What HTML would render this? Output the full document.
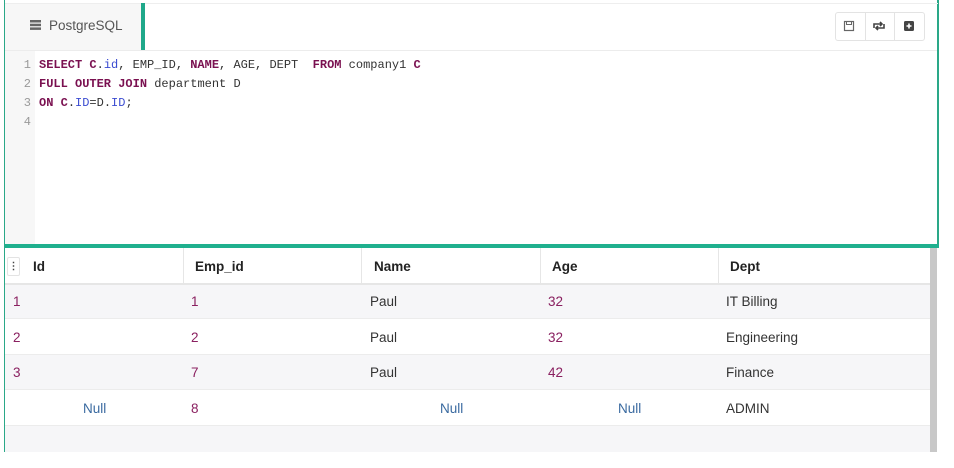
<!DOCTYPE html>
<html><head><style>
body{margin:0;width:954px;height:468px;background:#fff;position:relative;overflow:hidden;font-family:"Liberation Sans",sans-serif}
.a{position:absolute}
.code{font-family:"Liberation Mono",monospace;font-size:12px;color:#333;line-height:19px}
.k{color:#7a1050;font-weight:bold}.v{color:#3a4bd0}
.ln{color:#999;text-align:right;width:26px}
.hd{font-weight:bold;font-size:13.5px;color:#222}
.c{font-size:13.5px;color:#333}
.p{color:#8a2060}.n{color:#3a6aa0}
</style></head><body>
<div class="a" style="left:4px;top:0;width:1px;height:452px;background:#2aa888"></div>
<div class="a" style="left:937px;top:0;width:2px;height:248px;background:#2aa888"></div>
<div class="a" style="left:5px;top:3px;width:933px;height:1px;background:#eee"></div>
<div class="a" style="left:5px;top:4px;width:136px;height:46px;background:#f7f7f7"></div>
<div class="a" style="left:141px;top:3px;width:4px;height:47px;background:#1fa88a"></div>
<div class="a" style="left:5px;top:50px;width:932px;height:1px;background:#ececec"></div>
<svg class="a" style="left:30px;top:20px" width="11" height="10"><rect x="0" y="0" width="11" height="2.5" fill="#666"/><rect x="0" y="3.7" width="11" height="2.5" fill="#666"/><rect x="0" y="7.4" width="11" height="2.5" fill="#666"/></svg>
<div class="a" style="left:49px;top:18px;font-size:13.5px;color:#555">PostgreSQL</div>
<div class="a" style="left:835px;top:12px;width:88px;height:27px;border:1px solid #e3e3e3;border-radius:3px;background:#fff"></div>
<div class="a" style="left:865px;top:12px;width:1px;height:28px;background:#e3e3e3"></div>
<div class="a" style="left:894px;top:12px;width:1px;height:28px;background:#e3e3e3"></div>
<svg class="a" style="left:843px;top:20px" width="12" height="12"><rect x="1.5" y="1.5" width="9" height="9" fill="none" stroke="#666" stroke-width="1.2"/><rect x="3.5" y="1.5" width="5" height="3" fill="none" stroke="#666"/></svg>
<svg class="a" style="left:872px;top:20px" width="14" height="12"><path d="M2 8V4h8M8 2l2 2-2 2M12 4v4H4M6 10L4 8l2-2" fill="none" stroke="#444" stroke-width="1.6"/></svg>
<svg class="a" style="left:903px;top:20px" width="12" height="12"><rect x="1" y="1" width="10" height="10" rx="1.5" fill="#444"/><path d="M6 3.5v5M3.5 6h5" stroke="#fff" stroke-width="1.6"/></svg>
<div class="a" style="left:5px;top:51px;width:30px;height:193px;background:#f7f7f7"></div>
<div class="a code" style="left:5px;top:56px">
<div style="display:flex"><div class="ln">1</div><div style="padding-left:8px;white-space:pre"><span class="k">SELECT C</span>.<span class="v">id</span>, EMP_ID, <span class="k">NAME</span>, AGE, DEPT  <span class="k">FROM</span> company1 <span class="k">C</span></div></div>
<div style="display:flex"><div class="ln">2</div><div style="padding-left:8px;white-space:pre"><span class="k">FULL OUTER JOIN</span> department D</div></div>
<div style="display:flex"><div class="ln">3</div><div style="padding-left:8px;white-space:pre"><span class="k">ON C</span>.<span class="v">ID</span>=D.<span class="v">ID</span>;</div></div>
<div style="display:flex"><div class="ln">4</div></div>
</div>
<div class="a" style="left:5px;top:244px;width:934px;height:4px;background:#1fb08e"></div>
<div class="a" style="left:5px;top:248px;width:925px;height:204px;background:#f6f6f8"></div>
<div class="a" style="left:930px;top:248px;width:7px;height:204px;background:#c8c8c8"></div>
<div class="a" style="left:5px;top:248px;width:925px;height:35px;background:#fff;border-bottom:2px solid #e6e6e6"></div>
<div class="a" style="left:5px;top:319px;width:925px;height:35px;background:#fff"></div>
<div class="a" style="left:5px;top:390px;width:925px;height:35px;background:#fff"></div>
<div class="a" style="left:5px;top:318px;width:925px;height:1px;background:#ececec"></div>
<div class="a" style="left:5px;top:354px;width:925px;height:1px;background:#ececec"></div>
<div class="a" style="left:5px;top:389px;width:925px;height:1px;background:#ececec"></div>
<div class="a" style="left:5px;top:425px;width:925px;height:1px;background:#ececec"></div>
<div class="a" style="left:183px;top:248px;width:1px;height:35px;background:#e6e6e6"></div>
<div class="a" style="left:361px;top:248px;width:1px;height:35px;background:#e6e6e6"></div>
<div class="a" style="left:540px;top:248px;width:1px;height:35px;background:#e6e6e6"></div>
<div class="a" style="left:718px;top:248px;width:1px;height:35px;background:#e6e6e6"></div>
<div class="a" style="left:7px;top:257px;width:11px;height:17px;border:1px solid #e3e3e3;border-radius:2px;font-size:10px;text-align:center;line-height:17px;color:#444;font-weight:bold">&#8942;</div>
<div class="a hd" style="left:33px;top:259px">Id</div>
<div class="a hd" style="left:195px;top:259px">Emp_id</div>
<div class="a hd" style="left:374px;top:259px">Name</div>
<div class="a hd" style="left:552px;top:259px">Age</div>
<div class="a hd" style="left:730px;top:259px">Dept</div>
<div class="a c p" style="left:13px;top:294px">1</div><div class="a c p" style="left:191px;top:294px">1</div><div class="a c" style="left:370px;top:294px">Paul</div><div class="a c p" style="left:548px;top:294px">32</div><div class="a c" style="left:726px;top:294px">IT Billing</div>
<div class="a c p" style="left:13px;top:330px">2</div><div class="a c p" style="left:191px;top:330px">2</div><div class="a c" style="left:370px;top:330px">Paul</div><div class="a c p" style="left:548px;top:330px">32</div><div class="a c" style="left:726px;top:330px">Engineering</div>
<div class="a c p" style="left:13px;top:365px">3</div><div class="a c p" style="left:191px;top:365px">7</div><div class="a c" style="left:370px;top:365px">Paul</div><div class="a c p" style="left:548px;top:365px">42</div><div class="a c" style="left:726px;top:365px">Finance</div>
<div class="a c n" style="left:83px;top:401px">Null</div><div class="a c p" style="left:191px;top:401px">8</div><div class="a c n" style="left:440px;top:401px">Null</div><div class="a c n" style="left:618px;top:401px">Null</div><div class="a c" style="left:726px;top:401px">ADMIN</div>
</body></html>
